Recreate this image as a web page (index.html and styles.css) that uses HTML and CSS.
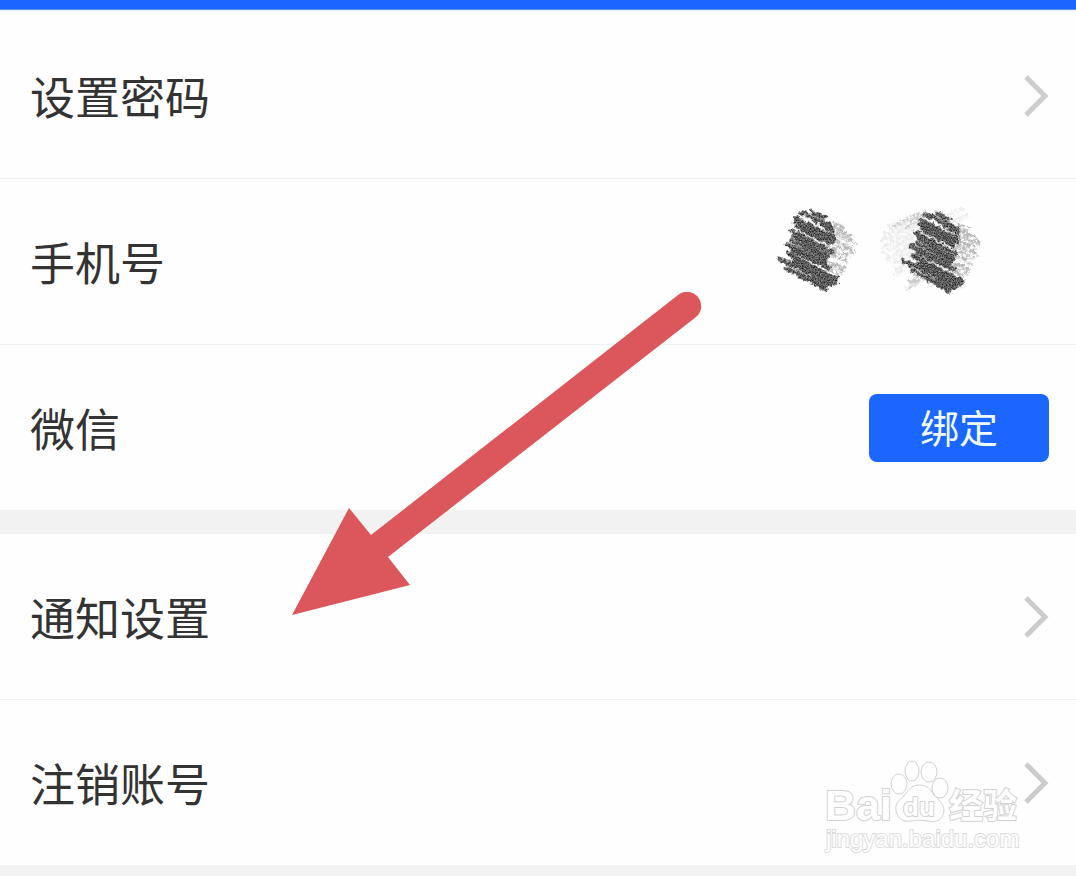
FILE: index.html
```
<!DOCTYPE html>
<html lang="zh-CN">
<head>
  <meta charset="UTF-8">
  <title>账号设置</title>
  <meta name="viewport" content="width=device-width, initial-scale=1.0">
  <link rel="stylesheet" href="styles.css">
</head>
<body>
  <div class="top-bar"></div>
  <main class="settings">
    <section class="group">
      <a class="row" href="#password">
        <span class="label">设置密码</span>
        <svg class="chevron" viewBox="0 0 26 44" aria-hidden="true"><path d="M3 3L22 22L3 41"/></svg>
      </a>
      <div class="row">
        <span class="label">手机号</span>
        <!-- número oculto -->
        <svg class="scribble" viewBox="0 0 900 360" aria-hidden="true">
          <defs>
            <filter id="grain" x="-5%" y="-5%" width="110%" height="110%" color-interpolation-filters="sRGB">
              <feTurbulence type="fractalNoise" baseFrequency="0.07" numOctaves="2" seed="4" result="w"/>
              <feDisplacementMap in="SourceGraphic" in2="w" scale="20" xChannelSelector="R" yChannelSelector="G" result="d"/>
              <feTurbulence type="fractalNoise" baseFrequency="0.26" numOctaves="2" seed="7" result="n"/>
              <feColorMatrix in="n" type="matrix" values="0.9 0 0 0 -0.1  0.9 0 0 0 -0.1  0.9 0 0 0 -0.1  0 0 0 0 1" result="g"/>
              <feComposite in="g" in2="d" operator="in"/>
            </filter>
            <filter id="dust" x="-5%" y="-5%" width="110%" height="110%" color-interpolation-filters="sRGB">
              <feTurbulence type="fractalNoise" baseFrequency="0.1" numOctaves="3" seed="9" result="n"/>
              <feDisplacementMap in="SourceGraphic" in2="n" scale="26" xChannelSelector="R" yChannelSelector="G" result="d"/>
              <feColorMatrix in="n" type="matrix" values="0 0 0 0 0  0 0 0 0 0  0 0 0 0 0  0 3 0 0 -0.8" result="a"/>
              <feComposite in="d" in2="a" operator="in"/>
            </filter>
            <g id="dark">
              <path d="M158 66L192 82M122 68L216 108M138 72L220 124M108 84L222 142M104 96L216 154M112 112L206 160M94 122L214 186M100 138L204 198M94 152L200 208M80 162L194 220M98 182L206 232M84 190L184 244M56 206L140 246M100 214L212 264M80 236L200 288M140 232L232 266M140 246L228 278M130 262L196 298M160 262L212 286"/>
            </g>
            <g id="light">
              <path d="M222 100L250 114M220 114L272 142M218 128L284 158M214 144L270 172M210 158L278 188M204 172L262 198M202 188L260 214M170 208L254 232M196 222L246 242M200 236L236 254"/>
            </g>
          </defs>
          <g filter="url(#dust)">
            <g class="smudge-faint"><path d="M530 88L610 58M570 100L620 78M470 70L390 112M480 84L374 134M472 100L366 152M470 118L370 170M466 136L374 190M462 154L384 208M460 172L396 224M460 190L412 240M452 210L410 254"/></g>
            <g class="smudge-mid"><path d="M494 68L456 84L400 110M480 86L440 114M492 264L440 296M470 262L450 276"/></g>
            <g class="smudge-light"><use href="#light"/><use href="#light" x="374" y="6"/></g>
          </g>
          <g class="smudge-dark" filter="url(#grain)"><use href="#dark"/><use href="#dark" x="374" y="6"/></g>
        </svg>
      </div>
      <div class="row">
        <span class="label">微信</span>
        <button class="bind-btn" type="button">绑定</button>
      </div>
    </section>
    <section class="group">
      <a class="row" href="#notice">
        <span class="label">通知设置</span>
        <svg class="chevron" viewBox="0 0 26 44" aria-hidden="true"><path d="M3 3L22 22L3 41"/></svg>
      </a>
      <a class="row" href="#cancel">
        <span class="label">注销账号</span>
        <svg class="chevron" viewBox="0 0 26 44" aria-hidden="true"><path d="M3 3L22 22L3 41"/></svg>
      </a>
    </section>

    <svg class="arrow" viewBox="0 0 410 324" aria-hidden="true">
      <path d="M0 323L57 216L79 243L386 3A14 14 0 0 1 404 25L96 265L118 293Z"/>
    </svg>

    <svg class="watermark" viewBox="0 0 266 136">
      <text class="wm-latin" x="15" y="80">Bai</text>
      <ellipse cx="89" cy="44" rx="8" ry="10"/>
      <ellipse cx="102" cy="31" rx="7" ry="10"/>
      <ellipse cx="119" cy="32" rx="8" ry="10"/>
      <ellipse cx="130" cy="48" rx="8" ry="10"/>
      <path d="M109 45C99 45 98 53 92 58C87 62 85 66 86 71C88 80 94 82 101 81C107 80 112 80 118 81C127 83 133 79 134 71C134 63 128 60 124 55C120 49 117 45 109 45Z"/>
      <text class="wm-du" x="93" y="76">du</text>
      <text class="wm-cjk" x="139" y="78">经验</text>
      <text class="wm-url" x="16" y="107">jingyan.baidu.com</text>
    </svg>
  </main>
</body>
</html>
```
FILE: styles.css
```
* {
  box-sizing: border-box;
}
body {
  margin: 0;
  min-height: 100vh;
  background: #f2f2f2;
  color: #333;
  font-family: "Noto Sans CJK SC", sans-serif;
}
.top-bar {
  height: 10px;
  background: #1a66ff;
  border-bottom: 1px solid #5c8ee6;
}
.settings {
  position: relative;
  padding-top: 3px;
  background: linear-gradient(#e6f6ff, #fefefe 3px, #f2f2f2 3px);
}
.group {
  background: #fefefe;
}
.group + .group {
  margin-top: 23px;
}
.row {
  display: flex;
  align-items: center;
  justify-content: space-between;
  height: 166px;
  padding: 0 27px 0 30px;
  border-bottom: 1px solid #f0f0f0;
  color: inherit;
  text-decoration: none;
}
.row:last-child {
  border-bottom-color: #f2f2f2;
}
.label {
  font-size: 45px;
  line-height: 64px;
}
.chevron {
  width: 26px;
  height: 44px;
  fill: none;
  stroke: #ccc;
  stroke-width: 5;
}
.bind-btn {
  width: 180px;
  height: 68px;
  padding: 0 0 4px;
  border: none;
  border-radius: 8px;
  background: #1a66ff;
  color: #f0fbff;
  font-family: inherit;
  font-size: 39px;
  line-height: 64px;
  cursor: pointer;
}
.scribble {
  width: 300px;
  height: 120px;
  margin: 0 -11px 24px 0;
  fill: none;
  stroke-linecap: round;
}
.smudge-dark {
  stroke: #444;
  stroke-width: 13;
}
.smudge-light {
  stroke: #b8b8b8;
  stroke-width: 12;
}
.smudge-mid {
  stroke: #ccc;
  stroke-width: 12;
}
.smudge-faint {
  stroke: #ececec;
  stroke-width: 14;
}
.arrow {
  position: absolute;
  top: 282px;
  left: 292px;
  width: 410px;
  height: 324px;
  fill: #db575b;
  pointer-events: none;
}
.watermark {
  position: absolute;
  right: 0;
  bottom: -10px;
  width: 266px;
  height: 136px;
  fill: #fefefe;
  stroke: #d2d2d2;
  stroke-width: 1;
  pointer-events: none;
}
.watermark text {
  font-family: "Liberation Sans", "Noto Sans CJK SC", sans-serif;
  font-weight: bold;
  paint-order: stroke;
  stroke-width: 2;
}
.watermark .wm-latin {
  font-size: 43px;
}
.watermark .wm-du {
  font-size: 26px;
}
.watermark .wm-cjk {
  font-size: 34px;
}
.watermark .wm-url {
  font-size: 24px;
  font-weight: normal;
  stroke: #ddd;
}
```
